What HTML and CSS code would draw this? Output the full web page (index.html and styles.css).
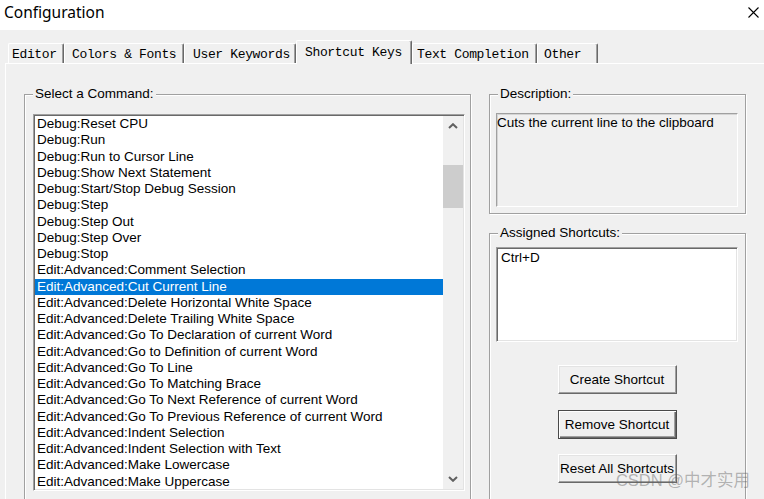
FILE: index.html
```html
<!DOCTYPE html>
<html>
<head>
<meta charset="utf-8">
<link rel="stylesheet" href="styles.css">
</head>
<body>
<div class="window">
  <div class="titlebar">
    <span class="title">Configuration</span>
    <svg class="close" viewBox="0 0 11 11" width="11" height="11"><path d="M0.5 0.5L10.5 10.5M10.5 0.5L0.5 10.5" stroke="#000" stroke-width="1.1" fill="none"/></svg>
  </div>
  <div class="tabs">
    <div class="tab t-editor">Editor</div>
    <div class="tab t-colors">Colors &amp; Fonts</div>
    <div class="tab t-user">User Keywords</div>
    <div class="tab t-short active">Shortcut Keys</div>
    <div class="tab t-text">Text Completion</div>
    <div class="tab t-other">Other</div>
  </div>
  <div class="panel">
    <fieldset class="group group-cmd">
      <legend>Select a Command:</legend>
      <div class="listbox cmd-list">
        <ul class="items">
          <li>Debug:Reset CPU</li>
          <li>Debug:Run</li>
          <li>Debug:Run to Cursor Line</li>
          <li>Debug:Show Next Statement</li>
          <li>Debug:Start/Stop Debug Session</li>
          <li>Debug:Step</li>
          <li>Debug:Step Out</li>
          <li>Debug:Step Over</li>
          <li>Debug:Stop</li>
          <li>Edit:Advanced:Comment Selection</li>
          <li class="selected">Edit:Advanced:Cut Current Line</li>
          <li>Edit:Advanced:Delete Horizontal White Space</li>
          <li>Edit:Advanced:Delete Trailing White Space</li>
          <li>Edit:Advanced:Go To Declaration of current Word</li>
          <li>Edit:Advanced:Go to Definition of current Word</li>
          <li>Edit:Advanced:Go To Line</li>
          <li>Edit:Advanced:Go To Matching Brace</li>
          <li>Edit:Advanced:Go To Next Reference of current Word</li>
          <li>Edit:Advanced:Go To Previous Reference of current Word</li>
          <li>Edit:Advanced:Indent Selection</li>
          <li>Edit:Advanced:Indent Selection with Text</li>
          <li>Edit:Advanced:Make Lowercase</li>
          <li>Edit:Advanced:Make Uppercase</li>
        </ul>
        <div class="vscroll">
          <div class="sb-btn"><svg viewBox="0 0 10 6" width="10" height="6"><polyline points="1,5 5,1.2 9,5" fill="none" stroke="#606060" stroke-width="2"/></svg></div>
          <div class="sb-track"><div class="sb-thumb" style="margin-top:29px;height:43px"></div></div>
          <div class="sb-btn"><svg viewBox="0 0 10 6" width="10" height="6"><polyline points="1,1 5,4.8 9,1" fill="none" stroke="#606060" stroke-width="2"/></svg></div>
        </div>
      </div>
    </fieldset>
    <div class="rightcol">
      <fieldset class="group group-desc">
        <legend class="legend-r">Description:</legend>
        <div class="static">Cuts the current line to the clipboard</div>
      </fieldset>
      <fieldset class="group group-assigned">
        <legend class="legend-r">Assigned Shortcuts:</legend>
        <div class="listbox short-list">
          <div class="short-item">Ctrl+D</div>
        </div>
        <div class="buttons">
          <button class="btn">Create Shortcut</button>
          <button class="btn btn-default">Remove Shortcut</button>
          <button class="btn">Reset All Shortcuts</button>
        </div>
      </fieldset>
    </div>
  </div>
  <div class="watermark">CSDN @中才实用</div>
</div>
</body>
</html>
```
FILE: styles.css
```css
body {
  margin: 0;
}

.window {
  width: 764px;
  height: 499px;
  overflow: hidden;
  position: relative;
  background: #f0f0f0;
  font-family: "Liberation Sans", Arial, sans-serif;
  font-size: 13.5px;
  color: #000;
  display: flex;
  flex-direction: column;
}

.titlebar {
  height: 30px;
  flex: none;
  box-sizing: border-box;
  background: #fff;
  display: flex;
  justify-content: space-between;
  align-items: flex-start;
  padding: 0 5px 0 4px;
}

.title {
  font-family: "Noto Sans", "Open Sans", sans-serif;
  font-size: 15.5px;
  line-height: 21px;
  padding-top: 2px;
  color: #000;
}

.close {
  margin-top: 7px;
}

.tabs {
  flex: none;
  display: flex;
  align-items: flex-end;
  padding-left: 8px;
  margin-top: 10px;
  font-family: "Liberation Mono", "DejaVu Sans Mono", monospace;
  font-size: 13px;
  letter-spacing: -0.35px;
  color: #000;
}

.tab {
  box-sizing: border-box;
  height: 20px;
  line-height: 17px;
  padding-top: 2px;
  border-top: 1px solid #fff;
  border-left: 1px solid #fff;
  border-right: 1px solid #696969;
  box-shadow: inset -1px 0 0 #a0a0a0;
  border-radius: 2px 2px 0 0;
  background: #f0f0f0;
  white-space: pre;
}

.tab.active {
  height: 24px;
  line-height: 19px;
  margin-bottom: -1px;
  position: relative;
  z-index: 1;
}

.t-editor { width: 56px; padding-left: 3px; }
.t-colors { width: 120px; padding-left: 7px; }
.t-user { width: 112px; padding-left: 8px; }
.t-short { width: 116px; padding-left: 8px; }
.t-text { width: 125px; padding-left: 4px; }
.t-other { width: 61px; padding-left: 6px; }

.panel {
  flex: 1;
  margin-left: 5px;
  border-top: 1px solid #fff;
  border-left: 1px solid #fff;
  padding: 22px 0 0 18px;
  display: flex;
  gap: 18px;
  align-items: flex-start;
}

.group {
  margin: 0;
  min-width: 0;
  box-sizing: border-box;
  border: 1px solid #a0a0a0;
  box-shadow: inset 1px 1px 0 #fff, 1px 1px 0 #fff;
}

.group legend {
  padding: 0 2px;
  line-height: 16px;
  background: #f0f0f0;
}

.group legend.legend-r {
  margin-left: 2px;
}

.group-cmd {
  width: 447px;
  padding: 12px 5px 20px 8px;
}

.listbox {
  box-sizing: border-box;
  background: #fff;
  border: 1px solid;
  border-color: #a0a0a0 #fff #fff #a0a0a0;
  padding: 1px;
  box-shadow: inset 1px 1px 0 #696969, inset -1px -1px 0 #e3e3e3;
}

.cmd-list {
  width: 432px;
  height: 377px;
  display: flex;
}

.items {
  list-style: none;
  margin: 0;
  padding: 0;
  flex: 1;
  min-width: 0;
  overflow: hidden;
}

.items li {
  height: 16.25px;
  line-height: 16.25px;
  padding-left: 2px;
  white-space: nowrap;
}

.items li.selected {
  background: #0078d7;
  color: #fff;
}

.vscroll {
  width: 20px;
  flex: none;
  display: flex;
  flex-direction: column;
  background: #f0f0f0;
}

.sb-btn {
  height: 20px;
  flex: none;
  display: flex;
  align-items: center;
  justify-content: center;
}

.sb-track {
  flex: 1;
}

.sb-thumb {
  background: #cdcdcd;
}

.rightcol {
  width: 257px;
  flex: none;
  display: flex;
  flex-direction: column;
  gap: 11px;
}

.group-desc {
  padding: 11px 7px 6px 6px;
}

.static {
  height: 94px;
  box-sizing: border-box;
  border-top: 1px solid #a0a0a0;
  border-left: 1px solid #a0a0a0;
  border-right: 1px solid #fff;
  border-bottom: 1px solid #fff;
  box-shadow: inset 1px 1px 0 #d4d4d4;
  padding-top: 1px;
  line-height: 16px;
}

.group-assigned {
  padding: 6px 7px 60px 6px;
}

.short-list {
  height: 95px;
  padding: 2px 3px;
}

.short-item {
  line-height: 16px;
  padding-left: 1px;
}

.buttons {
  margin-top: 23px;
  display: flex;
  flex-direction: column;
  align-items: center;
  gap: 15.5px;
}

.btn {
  width: 119px;
  height: 29px;
  box-sizing: border-box;
  padding: 0;
  font: inherit;
  color: #000;
  background: #f0f0f0;
  border: 1px solid;
  border-color: #fff #696969 #696969 #fff;
  box-shadow: inset -1px -1px 0 #a0a0a0, inset 1px 1px 0 #e3e3e3;
}

.btn-default {
  border-color: #4a4a4a;
  box-shadow: inset 1px 1px 0 #fff, inset -1px -1px 0 #696969, inset -2px -2px 0 #a0a0a0;
}

.watermark {
  position: absolute;
  right: 14px;
  bottom: 9px;
  font-family: "Liberation Sans", "Noto Sans CJK SC", sans-serif;
  font-size: 16.5px;
  line-height: 19px;
  color: rgba(100, 100, 100, 0.45);
  white-space: nowrap;
}
```
